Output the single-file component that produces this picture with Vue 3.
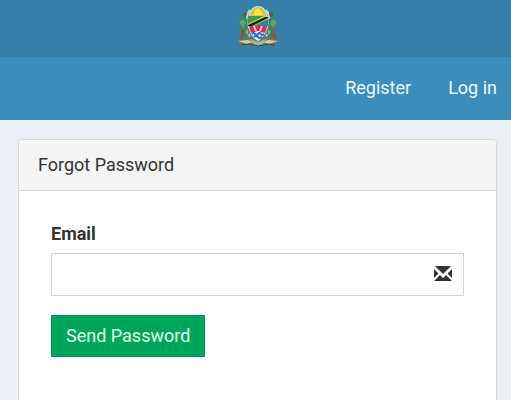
<script setup>
import { ref } from 'vue'

const email = ref('')
</script>

<template>
  <div class="page">
    <header>
      <div class="brand">
        <a href="#" aria-label="Home">
          <svg class="crest" viewBox="0 0 42 42" aria-hidden="true">
            <!-- tusks -->
            <path d="M13 4C8 10 8 22 13 31M29 4c5 6 5 18 0 27" fill="none" stroke="#c3dbe0" stroke-width="2" />
            <!-- supporters -->
            <path d="M9 4L6 6 5 11 2 15v6l3 4-3 9 6 2 4-8V16L9 12z" fill="#3c8762" />
            <path d="M33 4l3 2 1 5 3 4v6l-3 4 3 9-6 2-4-8V16l3-4z" fill="#3c8762" />
            <path d="M7 6l3 1-1 4-3-1zM35 6l-3 1 1 4 3-1z" fill="#684f40" />
            <path d="M2 16l4-3 3 4-3 5zM40 16l-4-3-3 4 3 5z" fill="#649d77" />
            <path d="M5 24l3 1-3 9-3-1zM37 24l-3 1 3 9 3-1z" fill="#8e4f42" />
            <path d="M8 26l3-3v6zM34 26l-3-3v6z" fill="#7fb77f" />
            <!-- mountain base -->
            <path d="M1 36l6-4 7-2 7 4 7-4 7 2 6 4-4 5-7-2-9 1-9-1-7 2z" fill="#667b60" />
            <path d="M1 35l10-1 5 2-6 2zM41 35l-10-1-5 2 6 2z" fill="#d5cdae" />
            <path d="M13 33l8 3 8-3-3 5-5 2-5-2z" fill="#9eb5a8" />
            <path d="M4 39l8-1 9 2 10-2 7 1" fill="none" stroke="#35463c" stroke-width="1" />
            <!-- shield -->
            <path d="M12 8Q14 0 21 0t9 8c3 9 2 19-9 27C10 27 9 17 12 8z" fill="#c9dde8" />
            <path d="M13 9q2-8 8-8t8 8v3H13z" fill="#dfc343" />
            <path d="M21 2l3 3 2 4H16l2-4z" fill="#fbeb42" />
            <path d="M11 10h20v10H11z" fill="#3aa04f" />
            <path d="M31 13v7H20z" fill="#347db9" />
            <path d="M11 18L27 10h4v3L16 20h-5z" fill="#e4d43c" />
            <path d="M11 19L28 11h3v1L15 20h-4z" fill="#14221d" />
            <path d="M12 20h18l-1 4q-1 4-4 3l-4-2-4 2q-3 1-4-3z" fill="#e32643" />
            <path d="M17 20l2 5M25 20l-2 5" stroke="#d9c6e0" stroke-width="2" />
            <path d="M14 27l7-2 7 2q-2 5-7 8-5-3-7-8z" fill="#dceafa" />
            <path d="M15 28q2-2 3 0t3 0 3 0 3 0M17 31q2-2 4 0t4 0" fill="none" stroke="#2f65d4" stroke-width="2" />
          </svg>
        </a>
      </div>
      <nav>
        <a href="#">Register</a>
        <a href="#">Log in</a>
      </nav>
    </header>
    <main>
      <section class="panel">
        <h1>Forgot Password</h1>
        <form @submit.prevent>
          <label for="email">Email</label>
          <div class="field">
            <input id="email" v-model="email" type="email" />
            <svg class="envelope" viewBox="0 0 18 15" aria-hidden="true">
              <path d="M1 0h16L9 8zM0 3l4.500 4.500L0 12zM18 3v9l-4.500-4.500zM0 15l6-6 3 3 3-3 6 6z" fill="#333" />
            </svg>
          </div>
          <button type="submit">Send Password</button>
        </form>
      </section>
    </main>
  </div>
</template>

<style>
body {
  background: #ecf0f5;
}
</style>

<style scoped>
.page {
  box-sizing: border-box;
  display: flex;
  flex-direction: column;
  min-height: 100vh;
  background: #ebeef5;
  color: #333;
  font: 18px/26px Roboto, sans-serif;
}
.brand {
  display: flex;
  justify-content: center;
  padding: 6px 0 9px 4px;
  background: #367fa9;
}
.brand a {
  display: block;
  height: 42px;
}
.crest {
  display: block;
  width: 42px;
  height: 42px;
}
nav {
  display: flex;
  justify-content: flex-end;
  gap: 37px;
  padding: 18px 14px 19px;
  background: #3c8dbc;
}
nav a {
  color: #e9faff;
  text-decoration: none;
}
main {
  display: flex;
  flex: 1;
  flex-direction: column;
  padding: 19px 14px 0 18px;
}
.panel {
  flex: 1;
  border: 1px solid #d8d9dc;
  border-bottom: 0;
  border-radius: 5px 5px 0 0;
  background: #fff;
}
h1 {
  margin: 0;
  padding: 12px 19px;
  border-bottom: 1px solid #d8d9dc;
  border-radius: 4px 4px 0 0;
  background: #f4f4f4;
  font-size: 18px;
  font-weight: 400;
}
form {
  padding: 30px 32px;
}
label {
  display: block;
  margin-bottom: 6px;
  font-weight: 700;
}
.field {
  position: relative;
  margin-bottom: 19px;
}
input {
  display: block;
  box-sizing: border-box;
  width: 100%;
  height: 43px;
  padding: 8px 48px 8px 16px;
  border: 1px solid #d2d3d6;
  border-radius: 0;
  background: #fff;
  color: #555;
  font: inherit;
}
.envelope {
  position: absolute;
  top: 13px;
  right: 12px;
  width: 18px;
  height: 15px;
  pointer-events: none;
}
button {
  display: block;
  padding: 7px 14px;
  border: 1px solid #079653;
  border-radius: 0;
  background: #00a65a;
  color: #e2ffec;
  font: inherit;
}
</style>
